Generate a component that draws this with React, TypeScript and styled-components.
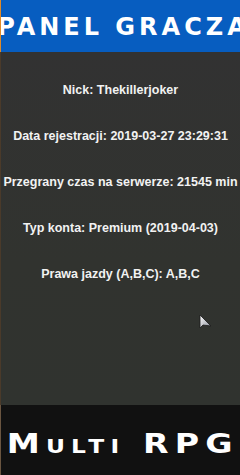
import React from 'react';
import styled, { createGlobalStyle } from 'styled-components';

const GlobalStyle = createGlobalStyle`
  html, body {
    margin: 0;
    padding: 0;
    background: #111111;
  }
  body {
    width: 240px;
    height: 475px;
    overflow: hidden;
  }
`;

const Screen = styled.div`
  position: relative;
  display: flex;
  flex-direction: column;
  width: 240px;
  height: 475px;
  overflow: hidden;
`;

const Section = styled.div<{ edge: string }>`
  border-left: 1px solid ${props => props.edge};
`;

const Header = styled(Section)`
  display: flex;
  align-items: center;
  justify-content: center;
  height: 52px;
  background: #075dc0;
  overflow: hidden;
`;

const HeaderTitle = styled.h1`
  margin: 0;
  font-family: "DejaVu Sans", sans-serif;
  font-weight: bold;
  font-size: 24px;
  letter-spacing: 4px;
  color: #ffffff;
  white-space: nowrap;
  line-height: 1;
  padding-top: 2px;
  padding-left: 6px;
`;

const InfoPanel = styled(Section)`
  display: flex;
  flex-direction: column;
  align-items: center;
  gap: 32px;
  height: 353px;
  box-sizing: border-box;
  padding-top: 31px;
  background: linear-gradient(180deg, #323232 0%, #31332f 60%, #30332f 100%);
`;

const InfoLine = styled.div`
  font-family: "Liberation Sans", Arial, sans-serif;
  font-weight: bold;
  font-size: 12.5px;
  line-height: 14px;
  color: #f2f2f2;
  white-space: nowrap;
  text-align: center;
`;

const Footer = styled(Section)`
  display: flex;
  align-items: center;
  justify-content: center;
  flex: 1;
  background: #111111;
`;

const FooterTitle = styled.div`
  font-family: "DejaVu Sans", sans-serif;
  font-weight: bold;
  font-size: 27px;
  font-variant: small-caps;
  letter-spacing: 5px;
  color: #ffffff;
  white-space: nowrap;
  line-height: 1;
  transform: scaleX(1.23);
  padding-top: 6px;
  padding-left: 4px;
`;

const Cursor = styled.svg`
  position: absolute;
  left: 199px;
  top: 314px;
  width: 14px;
  height: 16px;
`;

const rows = [
  'Nick: Thekillerjoker',
  'Data rejestracji: 2019-03-27 23:29:31',
  'Przegrany czas na serwerze: 21545 min',
  'Typ konta: Premium (2019-04-03)',
  'Prawa jazdy (A,B,C): A,B,C',
];

export default function App() {
  return (
    <>
      <GlobalStyle />
      <Screen>
        <Header edge="#e08a28">
          <HeaderTitle>PANEL GRACZA</HeaderTitle>
        </Header>
        <InfoPanel edge="#4a3a2a">
          {rows.map(text => (
            <InfoLine key={text}>{text}</InfoLine>
          ))}
        </InfoPanel>
        <Footer edge="#6a5540">
          <FooterTitle>Multi RPG</FooterTitle>
        </Footer>
        <Cursor viewBox="0 0 14 16" aria-hidden="true">
          <defs>
            <linearGradient id="cur" x1="0" y1="0" x2="1" y2="1">
              <stop offset="0" stopColor="#ffffff" />
              <stop offset="1" stopColor="#8a8f9a" />
            </linearGradient>
          </defs>
          <path d="M1 1 L1 14 L4 11 L12 12 Z" fill="url(#cur)" stroke="#1a1a1a" strokeWidth="0.8" />
        </Cursor>
      </Screen>
    </>
  );
}
